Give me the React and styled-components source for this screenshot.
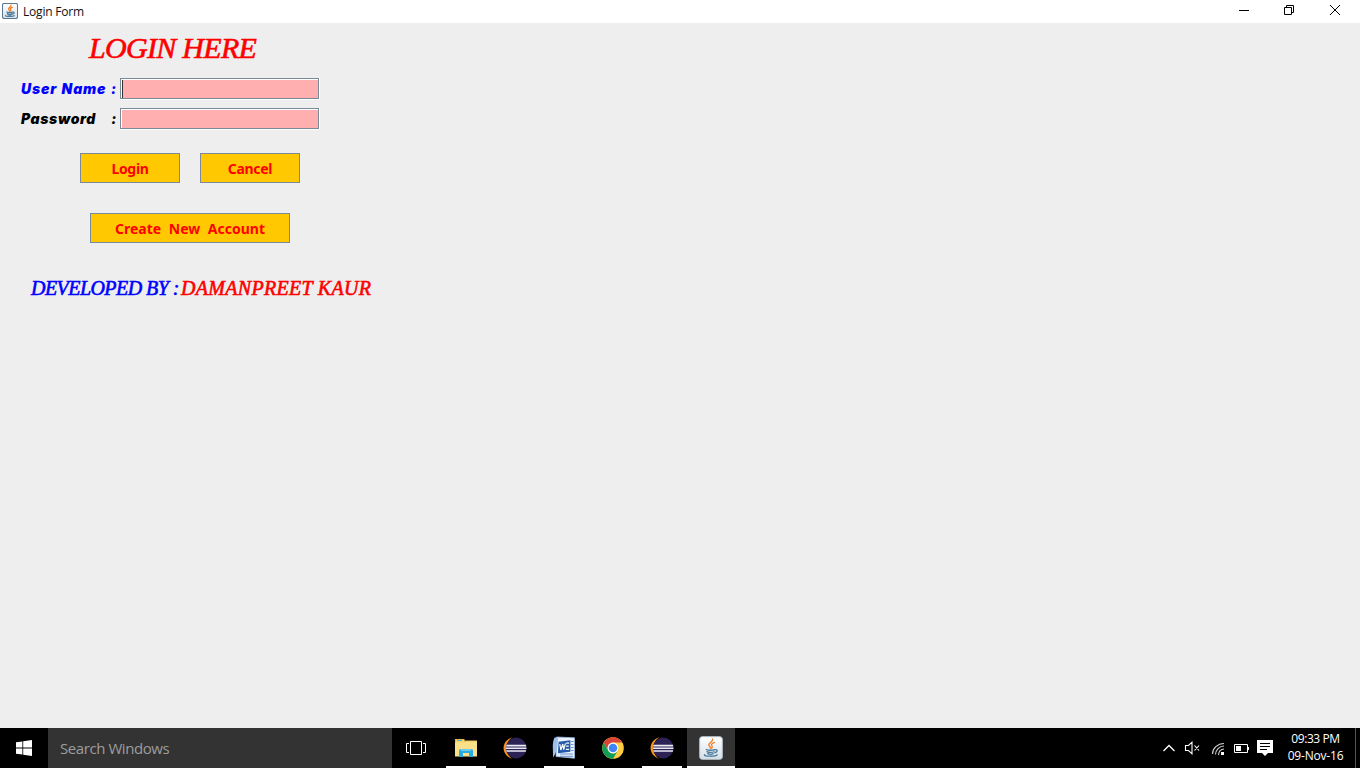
import React from "react";
import styled, { createGlobalStyle } from "styled-components";

const Global = createGlobalStyle`
  * { box-sizing: border-box; }
  body { margin: 0; overflow: hidden; background: #eee; }
`;

const Screen = styled.div`
  width: 1360px;
  height: 768px;
  display: flex;
  flex-direction: column;
  background: #eee;
  font-family: "Open Sans", "Noto Sans", sans-serif;
`;

const TitleBar = styled.header`
  height: 23px;
  flex: none;
  display: flex;
  align-items: flex-start;
  padding: 3px 0 0 2px;
  background: #fff;
  color: #111;
`;
const WindowTitle = styled.span`
  flex: 1;
  margin-left: 5px;
  font-size: 12px;
  line-height: 17px;
  letter-spacing: -0.2px;
`;
const WindowControls = styled.div`
  display: flex;
  height: 22px;
  margin-top: -3px;
`;
const ControlButton = styled.button`
  width: ${(p) => p.$width || 46}px;
  padding: 0;
  border: 0;
  background: none;
  display: flex;
  align-items: flex-start;
  justify-content: flex-start;
`;

const Content = styled.main`
  flex: 1;
  display: flex;
  flex-direction: column;
  align-items: flex-start;
`;
const Fancy = styled.span`
  font-family: "Liberation Serif", serif;
  font-style: italic;
  font-weight: 400;
  font-size: ${(p) => p.$size}px;
  line-height: 30px;
  letter-spacing: ${(p) => p.$spacing}px;
  color: ${(p) => p.$color};
  -webkit-text-stroke: 0.6px ${(p) => p.$color};
  white-space: pre;
`;
const Heading = styled.h1`
  margin: 9px 0 0 89px;
  height: 30px;
  font-size: 30px;
  line-height: 30px;
`;
const Fields = styled.form`
  display: flex;
  flex-direction: column;
  gap: 9px;
  margin: 16px 0 0 21px;
`;
const FieldRow = styled.label`
  display: flex;
  align-items: center;
  height: 21px;
`;
const FieldLabel = styled.span`
  width: 99px;
  padding-right: 3px;
  display: flex;
  justify-content: space-between;
  font-family: Inter, "Liberation Sans", sans-serif;
  font-style: italic;
  font-weight: 900;
  font-size: 14px;
  line-height: 21px;
  letter-spacing: ${(p) => p.$spacing || 0}px;
  word-spacing: 1px;
  color: ${(p) => p.$color};
  white-space: pre;
`;
const Input = styled.span`
  width: 199px;
  height: 21px;
  display: flex;
  border: 1px solid #7a8a99;
  box-shadow: inset 1px 1px 0 #fff, 0 1px 0 #fff, 1px 0 0 #fff;
  background: #ffafaf;
`;
const Caret = styled.i`
  width: 1px;
  height: 18px;
  margin: 1px 0 0 1px;
  background: #333;
`;
const ButtonRow = styled.div`
  display: flex;
  gap: 20px;
  margin: ${(p) => p.$margin};
`;
const Button = styled.button`
  width: ${(p) => p.$width}px;
  height: 30px;
  padding: 1px 0 0;
  border: 1px solid #7a8a99;
  background: #ffc800;
  color: #f00;
  font-family: "Comic Sans MS", "Noto Sans", sans-serif;
  font-weight: 700;
  font-size: 14px;
  letter-spacing: ${(p) => p.$spacing}px;
  word-spacing: 4px;
`;
const Credit = styled.p`
  display: flex;
  margin: 30px 0 0 31px;
`;
const CreditLabel = styled.span`
  width: 150px;
  display: flex;
`;

const Taskbar = styled.footer`
  height: 40px;
  flex: none;
  display: flex;
  background: #000;
  color: #fff;
`;
const TaskButton = styled.div`
  width: ${(p) => p.$width || 48}px;
  height: 40px;
  margin-right: ${(p) => p.$gap || 0}px;
  display: flex;
  align-items: center;
  justify-content: center;
  background: ${(p) => (p.$active ? "#333" : "transparent")};
  box-shadow: ${(p) => (p.$open ? "inset 0 -2px 0 #fff" : "none")};
`;
const Search = styled.div`
  width: 344px;
  padding-left: 12px;
  background: #333;
  color: #9d9d9d;
  font-size: 15px;
  line-height: 41px;
  letter-spacing: -0.43px;
`;
const Tray = styled.div`
  margin-left: auto;
  display: flex;
  align-items: center;
`;
const Clock = styled.div`
  width: 80px;
  margin-top: -2px;
  padding-left: 1px;
  text-align: center;
  font-size: 12px;
  line-height: 17px;
`;
const ClockLine = styled.div`
  letter-spacing: ${(p) => p.$spacing}px;
`;
const ShowDesktop = styled.div`
  width: 5px;
  height: 40px;
  border-left: 1px solid #555;
`;

function JavaIcon({ size, id }) {
  return (
    <svg width={size} height={size} viewBox="0 0 24 24">
      <defs>
        <linearGradient id={id} x1="0" y1="0" x2="0" y2="1">
          <stop offset="0" stopColor="#fff" />
          <stop offset="1" stopColor="#d5e0e8" />
        </linearGradient>
      </defs>
      <rect x=".7" y=".7" width="22.6" height="22.6" rx="2.5" fill={`url(#${id})`} stroke={size < 20 ? "#587a94" : "#b9c5cd"} strokeWidth={size < 20 ? 1.6 : 1} />
      <g fill="none" strokeLinecap="round" strokeWidth={size < 20 ? 1.8 : 1.3}>
        <path d="M13.5 3c1 3-5 4-3.5 6.5.6 1 1.5 1.3 1.3 2.7M15.5 6.5c-3 1-3.8 2-2.5 3.5.6.9.3 1.7-.7 2.3" stroke="#ef7d22" />
        <path d="M7.3 13.5c1.6 1 6.5 1 8.2.1M8 15.6c1.6 1 5.3 1 7 .1M8.6 17.6c1.6.8 4.2.8 5.6.1M16 13.8c2.6-.8 3.3 1.8-.1 3M5.5 18.7c-1 2 11.5 2 12.7.2" stroke="#4d7b9b" />
      </g>
    </svg>
  );
}

function EclipseIcon({ id }) {
  return (
    <svg width="24" height="22" viewBox="0 0 24 22">
      <clipPath id={id}><circle cx="13.2" cy="11" r="10.4" /></clipPath>
      <path d="M9.5.3C-2.4 3.7-2.4 18.5 9.5 21.8 1.4 17.2 1.5 5 9.5.3Z" fill="#f7941e" />
      <circle cx="13.2" cy="11" r="10.4" fill="#2c2255" />
      <g clipPath={`url(#${id})`} fill="#eceaf5">
        <path d="M2 7.8h22v1.6H2zM2 10.5h22v1.6H2zM2 13.2h22v1.5H2z" />
      </g>
    </svg>
  );
}

function FolderIcon() {
  return (
    <svg width="22" height="19" viewBox="0 0 22 19">
      <path d="M0 0h9.5v1.5H22V17H0z" fill="#e9bd49" />
      <path d="M1 1h8v1.5h12v2H1z" fill="#f6d66c" />
      <path d="M2 .8h5v1.1H2z" fill="#39b6e8" />
      <path d="M0 3.5h10L11.5 2.5H22V17.5H0z" fill="#fbe08a" />
      <path d="M4 18v-6.5q0-1.5 1.5-1.5h11q1.5 0 1.5 1.5V18h-4v-4H8v4z" fill="#29abe2" />
      <path d="M5 10h12l-1.5 2h-9z" fill="#6bcaf0" />
    </svg>
  );
}

function WordIcon() {
  return (
    <svg width="24" height="24" viewBox="0 0 24 24">
      <path d="M4.5 1 22.5 1.8v20.4L4 20.5z" fill="#e8f1fd" stroke="#9bb9e2" strokeWidth=".8" />
      <path d="M19 5.5h2.5M19 8.5h2.5M19 11.5h2.5M19 14.5h2.5M8 18h13M8 20.3h13" stroke="#6d93c9" strokeWidth="1" />
      <path d="M2.5 1.5h3.8C5.5 6 6.5 14 1 21.8 1.4 15-.4 8 2.5 1.5Z" fill="#9fc0eb" />
      <path d="m6.6 5.8 11.8-1.6v11.6L6 17.2z" fill="#2458a9" />
      <path d="m7.8 8 1 6 2-6 .9 5.6L13.5 7.4M14.2 7.2h3M14.2 10.2h2.5M13.8 13.3h3.2" fill="none" stroke="#fff" strokeWidth="1.2" />
    </svg>
  );
}

function ChromeIcon() {
  return (
    <svg width="22" height="22" viewBox="0 0 22 22">
      <circle cx="11" cy="11" r="10.8" fill="#ffcd40" />
      <path d="M1.65 5.6A10.8 10.8 0 0 1 20.35 5.6H11A5.4 5.4 0 0 0 6.3 13.7Z" fill="#db4437" />
      <path d="M1.65 5.6 6.3 13.7A5.4 5.4 0 0 0 15.7 13.7L11 21.8A10.8 10.8 0 0 1 1.65 5.6Z" fill="#0f9d58" />
      <circle cx="11" cy="11" r="5.4" fill="#fff" />
      <circle cx="11" cy="11" r="4.3" fill="#4285f4" />
    </svg>
  );
}

function WindowsIcon() {
  return (
    <svg width="16" height="16" viewBox="0 0 16 16" fill="#fff">
      <path d="M0 2.3 6.4 1.4v6.1H0zM7.2 1.3 16 0v7.5H7.2zM0 8.4h6.4v6.2L0 13.7zM7.2 8.4H16V16l-8.8-1.3z" />
    </svg>
  );
}

function TaskViewIcon() {
  return (
    <svg width="20" height="14" viewBox="0 0 20 14" fill="none" stroke="#fff">
      <path d="M4.5.5h11v13h-11zM3 2.5H.5v9H3M17 2.5h2.5v9H17" />
    </svg>
  );
}

function TrayIcons() {
  return (
    <svg width="113" height="40" viewBox="1162 728 113 40" fill="none" stroke="#fff">
      <path d="m1163.5 751 5.5-5.5 5.5 5.5" strokeWidth="1.3" />
      <path d="M1185.5 745.5h3l3.5-3.3v11.6l-3.5-3.3h-3zM1194.5 745.5l4.5 5M1199 745.5l-4.5 5" strokeWidth="1.1" />
      <path d="M1212.5 754c0-5.5 5-10.5 11.5-10.5M1215.5 754.5c0-4.5 4-8.5 8.5-8.5M1218.5 755c0-3.5 2.5-6 5.5-6" strokeWidth="1.2" stroke="#ccc" />
      <path d="M1221 752h3v3h-3z" fill="#fff" stroke="none" />
      <path d="M1234.5 744.5h13v8h-13zM1248.5 747v3" />
      <path d="M1236 746h5v5h-5z" fill="#fff" stroke="none" />
      <path d="M1257 740h16v13h-5l-3 3-3-3h-5z" fill="#fff" stroke="none" />
      <path d="M1260 743.5h10M1260 746.5h10M1260 749.5h7" stroke="#000" />
    </svg>
  );
}

export default function App() {
  return (
    <Screen>
      <Global />
      <TitleBar>
        <JavaIcon size={16} id="java-title" />
        <WindowTitle>Login Form</WindowTitle>
        <WindowControls>
          <ControlButton $width={45}>
            <svg width="45" height="22" stroke="#000"><path d="M16 10.5h10" /></svg>
          </ControlButton>
          <ControlButton>
            <svg width="46" height="22" fill="none" stroke="#000"><path d="M16.5 7.5h7v7h-7zM18.5 7.5v-2h7v7h-2" /></svg>
          </ControlButton>
          <ControlButton>
            <svg width="46" height="22" fill="none" stroke="#000"><path d="m16 5 10 10M26 5 16 15" /></svg>
          </ControlButton>
        </WindowControls>
      </TitleBar>

      <Content>
        <Heading><Fancy $size={30} $spacing={-0.7} $color="#f00">LOGIN HERE</Fancy></Heading>
        <Fields>
          <FieldRow>
            <FieldLabel $color="#00f" $spacing={0.8}><span>User Name</span><span>:</span></FieldLabel>
            <Input><Caret /></Input>
          </FieldRow>
          <FieldRow>
            <FieldLabel $color="#000" $spacing={0.6}><span>Password</span><span>:</span></FieldLabel>
            <Input />
          </FieldRow>
        </Fields>
        <ButtonRow $margin="24px 0 0 80px">
          <Button $width={100} $spacing={-0.3}>Login</Button>
          <Button $width={100} $spacing={-0.3}>Cancel</Button>
        </ButtonRow>
        <ButtonRow $margin="30px 0 0 90px">
          <Button $width={200} $spacing={0}>Create New Account</Button>
        </ButtonRow>
        <Credit>
          <CreditLabel><Fancy $size={20} $spacing={-0.55} $color="#00f">DEVELOPED BY :</Fancy></CreditLabel>
          <Fancy $size={20} $spacing={0.3} $color="#f00">DAMANPREET KAUR</Fancy>
        </Credit>
      </Content>

      <Taskbar>
        <TaskButton><WindowsIcon /></TaskButton>
        <Search>Search Windows</Search>
        <TaskButton $gap={6}><TaskViewIcon /></TaskButton>
        <TaskButton $width={40} $gap={9} $open><FolderIcon /></TaskButton>
        <TaskButton $width={40} $gap={9}><EclipseIcon id="eclipse-a" /></TaskButton>
        <TaskButton $width={40} $gap={9} $open><WordIcon /></TaskButton>
        <TaskButton $width={40} $gap={9}><ChromeIcon /></TaskButton>
        <TaskButton $width={40} $gap={5} $open><EclipseIcon id="eclipse-b" /></TaskButton>
        <TaskButton $active $open><JavaIcon size={24} id="java-task" /></TaskButton>
        <Tray>
          <TrayIcons />
          <Clock>
            <ClockLine $spacing={-0.4}>09:33 PM</ClockLine>
            <ClockLine $spacing={-0.2}>09-Nov-16</ClockLine>
          </Clock>
          <ShowDesktop />
        </Tray>
      </Taskbar>
    </Screen>
  );
}
